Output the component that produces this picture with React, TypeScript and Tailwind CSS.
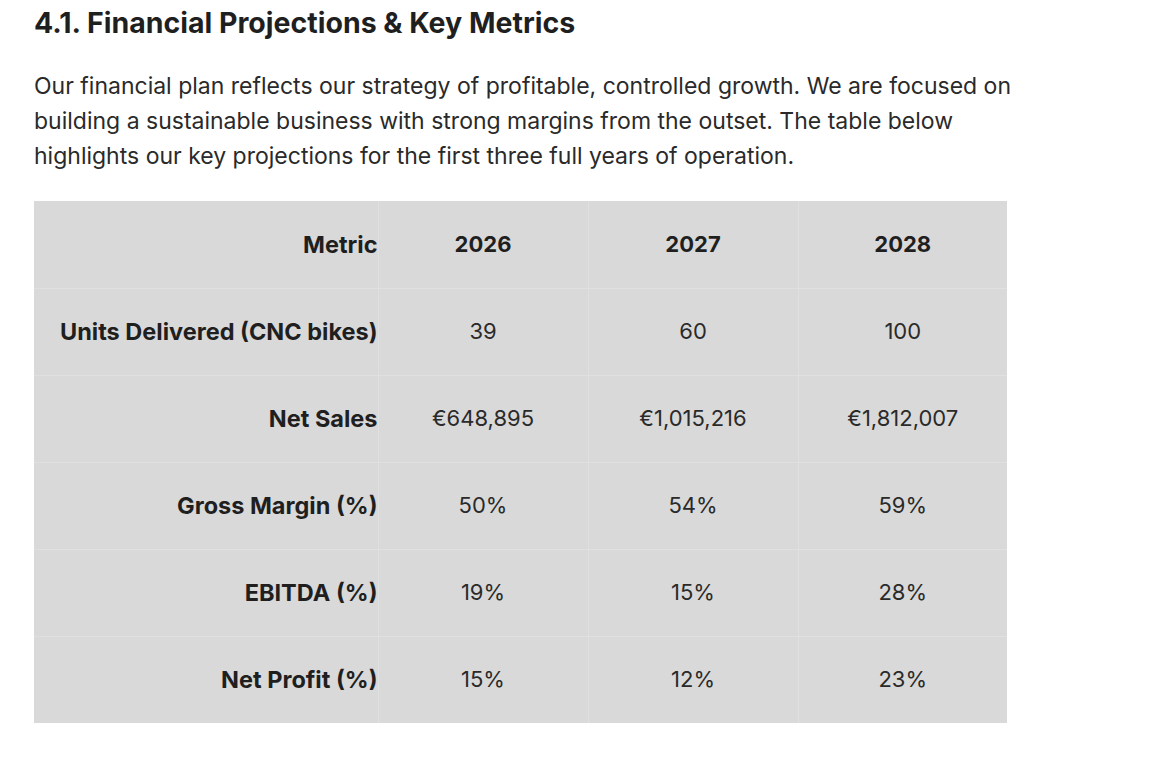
const rows = [
  { label: "Units Delivered (CNC bikes)", values: ["39", "60", "100"] },
  { label: "Net Sales", values: ["€648,895", "€1,015,216", "€1,812,007"] },
  { label: "Gross Margin (%)", values: ["50%", "54%", "59%"] },
  { label: "EBITDA (%)", values: ["19%", "15%", "28%"] },
  { label: "Net Profit (%)", values: ["15%", "12%", "23%"] },
];

export default function App() {
  return (
    <div className="min-h-screen bg-white text-[#1f1f1f] font-['Inter','Liberation_Sans',sans-serif] pl-[34px] pt-[5px]">
      <h1 className="text-[28.5px] leading-[36px] font-bold">4.1. Financial Projections &amp; Key Metrics</h1>

      <p className="mt-[28px] w-[985px] text-[23px] leading-[35px] text-[#2a2a2a]">
        Our financial plan reflects our strategy of profitable, controlled growth. We are focused on building a
        sustainable business with strong margins from the outset. The table below highlights our key projections
        for the first three full years of operation.
      </p>

      <table className="mt-[27px] w-[973px] border-collapse bg-[#d9d9d9] text-[22px]">
        <colgroup>
          <col className="w-[344px]" />
          <col className="w-[210px]" />
          <col className="w-[210px]" />
          <col className="w-[209px]" />
        </colgroup>
        <thead>
          <tr className="h-[87px]">
            <th className="text-right text-[23.5px] font-bold border-r border-[#e0e0e0]">Metric</th>
            <th className="text-center font-bold border-r border-[#e0e0e0]">2026</th>
            <th className="text-center font-bold border-r border-[#e0e0e0]">2027</th>
            <th className="text-center font-bold">2028</th>
          </tr>
        </thead>
        <tbody>
          {rows.map((r) => (
            <tr key={r.label} className="h-[87px] border-t border-[#e0e0e0]">
              <td className="text-right text-[23.5px] font-bold border-r border-[#e0e0e0]">{r.label}</td>
              {r.values.map((v, i) => (
                <td
                  key={i}
                  className={i < 2 ? "text-center text-[#2a2a2a] border-r border-[#e0e0e0]" : "text-center text-[#2a2a2a]"}
                >
                  {v}
                </td>
              ))}
            </tr>
          ))}
        </tbody>
      </table>
    </div>
  );
}
